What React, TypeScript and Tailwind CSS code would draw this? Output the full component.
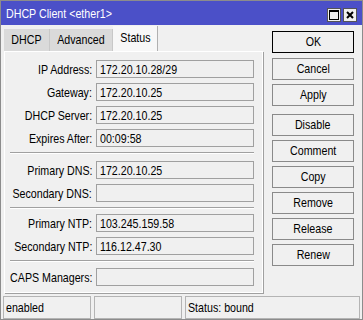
import React from "react";

const FONT = "font-['Liberation_Sans',Arial,sans-serif]";

// Arial Narrow is not available, so squeeze Liberation Sans horizontally
function N({ children, origin = "left" }: { children: React.ReactNode; origin?: "left" | "right" | "center" }) {
  const o = origin === "left" ? "origin-left" : origin === "right" ? "origin-right" : "origin-center";
  return <span className={`inline-block whitespace-nowrap scale-x-[0.82] ${o}`}>{children}</span>;
}

function TitleButton({ kind }: { kind: "max" | "close" }) {
  return (
    <div className="w-[14px] h-[14px] bg-[#f0f0f0] border border-[#555] flex items-center justify-center">
      {kind === "max" ? (
        <svg width="10" height="10" viewBox="0 0 10 10">
          <rect x="0.5" y="0.5" width="9" height="9" fill="none" stroke="#000" />
          <rect x="0" y="0" width="10" height="2" fill="#000" />
        </svg>
      ) : (
        <svg width="8" height="8" viewBox="0 0 8 8">
          <path d="M1 1 L7 7 M7 1 L1 7" stroke="#000" strokeWidth="2" />
        </svg>
      )}
    </div>
  );
}

function Row({ label, value }: { label: string; value?: string }) {
  return (
    <div className="flex items-center h-[18px]">
      <div className="w-[87px] flex justify-end leading-none">
        <N origin="right">{label}</N>
      </div>
      <div className="ml-[4px] w-[158px] h-[18px] border border-[#a0a0a0] bg-[#f0f0f0] pl-[3px] flex items-center leading-none">
        {value && <N>{value}</N>}
      </div>
    </div>
  );
}

function Sep() {
  return <div className="ml-[5px] w-[244px] h-[2px] border-t border-[#a0a0a0] border-b border-b-white" />;
}

function Btn({ label, primary }: { label: string; primary?: boolean }) {
  return (
    <div
      className={`h-[22px] w-[82px] flex items-center justify-center bg-[#f0f0f0] border ${
        primary ? "border-black" : "border-[#8a8a8a]"
      }`}
    >
      <N origin="center">{label}</N>
    </div>
  );
}

function Tab({ label, active, w }: { label: string; active?: boolean; w: string }) {
  return (
    <div
      className={`${w} flex items-center justify-center ${
        active
          ? "h-[25px] bg-[#f7f7f7] border-r border-[#b0b0b0] pb-[2px]"
          : "h-[22px] bg-[#dadada] border-r border-[#c8c8c8]"
      }`}
    >
      <N origin="center">{label}</N>
    </div>
  );
}

export default function App() {
  return (
    <div
      className={`${FONT} text-[13px] text-black w-[363px] h-[320px] bg-[#f0f0f0] border border-[#8c8c8c] flex flex-col overflow-hidden`}
    >
      <div className="h-[24px] bg-[#4b50c8] flex items-center justify-between pl-[5px] pr-[5px] shrink-0">
        <span className="text-white leading-none">
          <N>DHCP Client &lt;ether1&gt;</N>
        </span>
        <div className="flex gap-[2px] mt-[3px]">
          <TitleButton kind="max" />
          <TitleButton kind="close" />
        </div>
      </div>

      <div className="flex pl-[3px] shrink-0">
        <div className="w-[259px] flex flex-col">
          <div className="flex items-end h-[26px] pt-[1px]">
            <Tab label="DHCP" w="w-[46px]" />
            <Tab label="Advanced" w="w-[63px]" />
            <Tab label="Status" w="w-[45px]" active />
          </div>
          <div className="h-[242px] border border-white shadow-[1px_1px_0_#a0a0a0] flex flex-col pt-[8px]">
            <div className="flex flex-col gap-[5px]">
              <Row label="IP Address:" value="172.20.10.28/29" />
              <Row label="Gateway:" value="172.20.10.25" />
              <Row label="DHCP Server:" value="172.20.10.25" />
              <Row label="Expires After:" value="00:09:58" />
            </div>
            <div className="mt-[5px] mb-[7px]">
              <Sep />
            </div>
            <div className="flex flex-col gap-[5px]">
              <Row label="Primary DNS:" value="172.20.10.25" />
              <Row label="Secondary DNS:" />
            </div>
            <div className="mt-[5px] mb-[5px]">
              <Sep />
            </div>
            <div className="flex flex-col gap-[5px]">
              <Row label="Primary NTP:" value="103.245.159.58" />
              <Row label="Secondary NTP:" value="116.12.47.30" />
            </div>
            <div className="mt-[5px] mb-[6px]">
              <Sep />
            </div>
            <Row label="CAPS Managers:" />
          </div>
        </div>

        <div className="ml-[9px] pt-[6px] flex flex-col gap-[4px]">
          <div className="mb-[1px]">
            <Btn label="OK" primary />
          </div>
          <Btn label="Cancel" />
          <div className="mb-[4px]">
            <Btn label="Apply" />
          </div>
          <Btn label="Disable" />
          <Btn label="Comment" />
          <Btn label="Copy" />
          <Btn label="Remove" />
          <Btn label="Release" />
          <Btn label="Renew" />
        </div>
      </div>

      <div className="mt-auto flex gap-[3px] px-[2px] h-[23px]">
        <div className="w-[88px] border border-[#b4b4b4] flex items-center pl-[2px]">
          <N>enabled</N>
        </div>
        <div className="w-[88px] border border-[#b4b4b4]" />
        <div className="flex-1 border border-[#b4b4b4] flex items-center pl-[2px]">
          <N>Status: bound</N>
        </div>
      </div>
    </div>
  );
}
